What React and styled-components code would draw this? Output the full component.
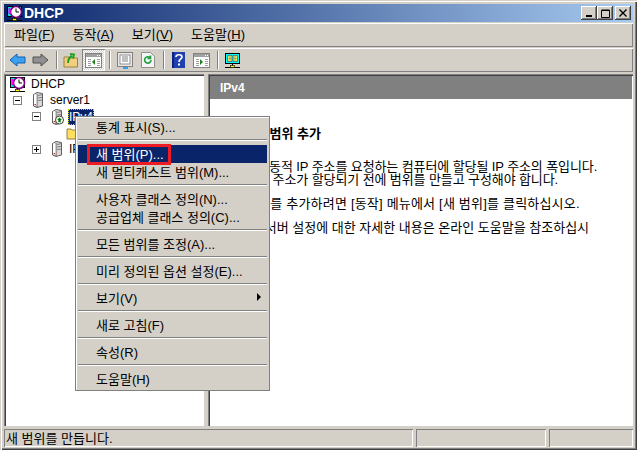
import React from "react";
import styled, { createGlobalStyle } from "styled-components";

const GlobalStyle = createGlobalStyle`
  html, body { margin: 0; padding: 0; background: #d4d0c8; }
  * { box-sizing: border-box; }
`;

const FONT = `"Liberation Sans", "Noto Sans CJK KR", sans-serif`;

const Win = styled.div`
  position: relative;
  width: 637px;
  height: 450px;
  display: flex;
  flex-direction: column;
  padding: 4px 4px 3px 4px;
  background: #d4d0c8;
  font-family: ${FONT};
  font-size: 13px;
  color: #000;
  overflow: hidden;
  box-shadow: inset 1px 1px 0 #d4d0c8, inset 2px 2px 0 #fff, inset -1px -1px 0 #404040, inset -2px -2px 0 #808080;
`;

const TitleBar = styled.div`
  height: 18px;
  flex: none;
  display: flex;
  align-items: center;
  padding: 0 2px 0 2px;
  background: linear-gradient(90deg, #0a246a, #a6caf0);
  color: #fff;
  font-weight: bold;
`;

const TitleText = styled.span`
  margin-left: 1px;
  font-family: "Liberation Sans", sans-serif;
  font-size: 14px;
`;

const CaptionButtons = styled.div`
  margin-left: auto;
  display: flex;
`;

const CapBtn = styled.div`
  width: 16px;
  height: 14px;
  margin-left: ${({ $gap }) => $gap || 0}px;
  background: #d4d0c8;
  box-shadow: inset -1px -1px 0 #404040, inset 1px 1px 0 #fff, inset -2px -2px 0 #808080;
  display: flex;
  align-items: center;
  justify-content: center;
`;

const Bar = styled.div`
  flex: none;
  display: flex;
  align-items: center;
  height: 24px;
  margin-top: 1px;
  background: #d4d0c8;
  box-shadow: inset 1px 1px 0 #fff, inset -1px -1px 0 #808080;
`;

const MenuBar = styled(Bar)`
  padding-left: 10px;
  gap: 18px;
`;

const MenuName = styled.span`
  line-height: 24px;
  white-space: nowrap;
`;

const ToolBar = styled(Bar)`
  padding-left: 2px;
`;

const ToolBtn = styled.div`
  width: ${({ $w }) => $w || 23}px;
  height: 22px;
  flex: none;
  display: flex;
  align-items: center;
  justify-content: center;
  ${({ $pressed }) =>
    $pressed &&
    `background: repeating-conic-gradient(#fff 0 25%, #d4d0c8 0 50%) 0 0 / 2px 2px;
     box-shadow: inset 1px 1px 0 #808080, inset -1px -1px 0 #fff;`}
`;

const ToolSep = styled.div`
  width: 2px;
  height: 18px;
  flex: none;
  margin: 0 2px 0 4px;
  background: #808080;
  border-right: 1px solid #fff;
`;

const Panes = styled.div`
  flex: 1;
  min-height: 0;
  margin-top: 2px;
  display: flex;
  gap: 4px;
`;

const Pane = styled.div`
  background: #fff;
  width: ${({ $w }) => ($w ? `${$w}px` : "auto")};
  flex: ${({ $w }) => ($w ? "none" : "1")};
  display: flex;
  flex-direction: column;
  overflow: hidden;
  padding: 2px 1px 1px 2px;
  box-shadow: inset 1px 1px 0 #808080, inset 2px 2px 0 #404040, inset -1px -1px 0 #fff;
`;

const Row = styled.div`
  height: 16.25px;
  display: flex;
  align-items: center;
  padding-left: ${({ $indent }) => $indent}px;
  white-space: nowrap;
  font-size: 12px;
`;

const Expander = styled.div`
  width: 9px;
  height: 9px;
  flex: none;
  margin-right: 9px;
  border: 1px solid #808080;
  background: #fff;
  position: relative;
  &::before {
    content: "";
    position: absolute;
    left: 1px;
    right: 1px;
    top: 3px;
    height: 1px;
    background: #000;
  }
  ${({ $open }) =>
    !$open &&
    `&::after {
      content: "";
      position: absolute;
      top: 1px;
      bottom: 1px;
      left: 3px;
      width: 1px;
      background: #000;
    }`}
`;

const TreeLabel = styled.span`
  margin-left: 4px;
  padding: 0 1px;
  ${({ $selected }) =>
    $selected &&
    `background: #0a246a; color: #fff; outline: 1px dotted #d4d000; outline-offset: -1px; line-height: 16px;`}
`;

const Header = styled.div`
  height: 23px;
  flex: none;
  background: #808080;
  color: #fff;
  font-weight: bold;
  font-size: 12px;
  display: flex;
  align-items: center;
  padding-left: 10px;
`;

const Body = styled.div`
  padding: 28px 0 0 20px;
  white-space: nowrap;
`;

const Heading = styled.div`
  font-weight: bold;
  line-height: 14px;
  padding-left: 24px;
  margin-bottom: 20px;
`;

const Para = styled.div`
  line-height: 12.5px;
  margin-bottom: 11.5px;
  letter-spacing: ${({ $spacing }) => $spacing || 0}px;
`;

const Small = styled.span`
  font-size: 11px;
`;

const StatusBar = styled.div`
  flex: none;
  height: 18px;
  margin-top: 3px;
  display: flex;
  gap: 3px;
`;

const StatusCell = styled.div`
  width: ${({ $w }) => ($w ? `${$w}px` : "auto")};
  flex: ${({ $w }) => ($w ? "none" : "1")};
  display: flex;
  align-items: center;
  padding: 0 0 2px 2px;
  white-space: nowrap;
  box-shadow: inset 1px 1px 0 #808080, inset -1px -1px 0 #fff;
`;

const ContextMenu = styled.div`
  position: absolute;
  left: 75px;
  top: 116px;
  width: 195px;
  padding: 2px 3px 3px 3px;
  background: #d4d0c8;
  box-shadow: inset 1px 1px 0 #808080, inset -1px -1px 0 #808080, inset 2px 2px 0 #fff;
`;

const Item = styled.div`
  position: relative;
  height: 18px;
  display: flex;
  align-items: center;
  padding: 0 6px 2px 18px;
  white-space: nowrap;
  ${({ $active }) => $active && `background: #0a246a; color: #fff;`}
`;

const Sep = styled.div`
  height: 2px;
  margin: 3px 0 4px 0;
  background: #808080;
  border-bottom: 1px solid #fff;
`;

const SubArrow = styled.span`
  margin-left: auto;
  width: 0;
  height: 0;
  border-left: 4px solid #000;
  border-top: 4px solid transparent;
  border-bottom: 4px solid transparent;
`;

const RedBox = styled.div`
  position: absolute;
  left: 9px;
  top: -1px;
  width: 84px;
  height: 21px;
  border: 3px solid #ed1c24;
`;

const MonitorIcon = ({ book }) => (
  <svg width="17" height="17" viewBox="0 0 17 17">
    <rect x="1.5" y="1.5" width="14" height="10" fill={book ? "#00ffff" : "#00e0e0"} stroke="#000" />
    {book ? (
      <>
        <path d="M3.5 3.5h4.5v6h-4.5zM9 3.5h4.5v6H9z" fill="#ffff66" stroke="#555" strokeWidth="0.7" />
        <path d="M4.5 5h3M4.5 6.5h3M4.5 8h3M9.5 5h3M9.5 6.5h3M9.5 8h3" stroke="#555" strokeWidth="0.6" />
      </>
    ) : (
      <>
        <circle cx="10" cy="7" r="5.5" fill="#fff" stroke="#800080" strokeWidth="1.6" />
        <path d="M10 3.5V7H13" fill="none" stroke="#000" />
        <rect x="2.5" y="3" width="2" height="6" fill="#ff00ff" />
      </>
    )}
    <path d="M8.5 12v2" stroke="#000" />
    <path d="M1 15.5h15" stroke="#000" />
    <rect x="6.5" y="13.5" width="4" height="2" fill="#ffff00" stroke="#000" strokeWidth="0.6" />
  </svg>
);

const ArrowIcon = ({ fill, stroke, flip }) => (
  <svg width="17" height="14" viewBox="0 0 17 14" style={flip ? { transform: "scaleX(-1)" } : undefined}>
    <path d="M1 7 L8 1 V4 H16 V10 H8 V13 Z" fill={fill} stroke={stroke} />
  </svg>
);

const FolderUpIcon = () => (
  <svg width="16" height="16" viewBox="0 0 16 16">
    <path d="M1 5h5l1 1h7.5v9H1z" fill="#f0d080" stroke="#a08040" />
    <path d="M5 11c0-4 2-6 4-7M7 2l4 .5-1 4" fill="none" stroke="#20a020" strokeWidth="2" />
  </svg>
);

const PaneIcon = ({ arrow, back }) => (
  <svg width="17" height="15" viewBox="0 0 17 15">
    <rect x="0.5" y="0.5" width="16" height="14" fill="#fff" stroke="#808080" />
    <rect x="1" y="1" width="15" height="3" fill="#a0a0a0" />
    <path d="M12 2.5h1M14 2.5h1" stroke="#fff" />
    <path d="M3 6.5h3M3 8.5h3M3 10.5h3M3 12.5h3M12 6.5h3M12 8.5h3M12 10.5h3M12 12.5h3" stroke="#a0a0a0" />
    <path d={back ? "M10 6v6l-3-3z" : "M7 6v6l3-3z"} fill={arrow} />
  </svg>
);

const ExportIcon = () => (
  <svg width="16" height="17" viewBox="0 0 16 17">
    <rect x="0.5" y="0.5" width="15" height="14" fill="#e8e8e8" stroke="#808080" />
    <rect x="3" y="3" width="10" height="9" fill="#fff" stroke="#909090" />
    <path d="M5 5h6M5 7h6M5 9h6" stroke="#808080" />
    <rect x="6" y="15" width="5" height="2" fill="#30a0f0" />
  </svg>
);

const RefreshIcon = () => (
  <svg width="14" height="16" viewBox="0 0 14 16">
    <path d="M0.5 0.5h9l4 4v11h-13z" fill="#f4f4f4" stroke="#909090" />
    <path d="M10 8a3.2 3.2 0 1 1-1-2.4M9.5 3.5v3h-3" fill="none" stroke="#20a040" strokeWidth="1.6" />
  </svg>
);

const HelpIcon = () => (
  <svg width="13" height="16" viewBox="0 0 13 16">
    <rect width="13" height="16" fill="#2040b0" />
    <rect x="0" y="0" width="2" height="16" fill="#102080" />
    <path d="M4 5c0-3 6-3 6 0 0 2-3 2-3 5" fill="none" stroke="#fff" strokeWidth="1.7" />
    <rect x="6" y="11.5" width="2" height="2" fill="#fff" />
  </svg>
);

const ServerIcon = ({ badge }) => (
  <svg width="14" height="16" viewBox="0 0 14 16">
    <path d="M2.5 2.5 L6 .5 L11.5 1.5 V14 L6 15.5 L2.5 14z" fill="#d8d8d8" stroke="#606060" />
    <path d="M6 2v13" stroke="#606060" />
    <path d="M7 3.5l4-.8M7 6l4-.6M7 8.5l4-.4" stroke="#808080" />
    <rect x="3" y="2.5" width="2.5" height="11" fill="#fff" />
    <rect x="3.6" y="12" width="1.2" height="1.2" fill="#d00000" />
    {badge && (
      <>
        <circle cx="9.5" cy="11" r="4" fill="#fff" stroke="#404040" />
        <path d="M9.5 8.5l2.5 2.5h-1.3v2.2h-2.4V11H7z" fill="#008000" />
      </>
    )}
  </svg>
);

const FolderIcon = () => (
  <svg width="14" height="14" viewBox="0 0 14 14">
    <path d="M1 3h4l1 1h7v9H1z" fill="#ffe060" stroke="#908040" />
  </svg>
);

const App = () => {
  return (
    <Win>
      <GlobalStyle />
      <TitleBar>
        <MonitorIcon />
        <TitleText>DHCP</TitleText>
        <CaptionButtons>
          <CapBtn>
            <svg width="8" height="8" viewBox="0 0 8 8"><rect x="1" y="6" width="6" height="2" /></svg>
          </CapBtn>
          <CapBtn>
            <svg width="9" height="9" viewBox="0 0 9 9"><path d="M.5 1.5h8v7h-8zM.5 1h8" fill="none" stroke="#000" /></svg>
          </CapBtn>
          <CapBtn $gap={2}>
            <svg width="8" height="8" viewBox="0 0 8 8"><path d="M.5.5l7 7M7.5.5l-7 7" stroke="#000" strokeWidth="1.4" /></svg>
          </CapBtn>
        </CaptionButtons>
      </TitleBar>

      <MenuBar>
        <MenuName>파일(<u>F</u>)</MenuName>
        <MenuName>동작(<u>A</u>)</MenuName>
        <MenuName>보기(<u>V</u>)</MenuName>
        <MenuName>도움말(<u>H</u>)</MenuName>
      </MenuBar>

      <ToolBar>
        <ToolBtn><ArrowIcon fill="#3aa0f0" stroke="#1060b0" /></ToolBtn>
        <ToolBtn><ArrowIcon fill="#909090" stroke="#505050" flip /></ToolBtn>
        <ToolSep />
        <ToolBtn $w={22}><FolderUpIcon /></ToolBtn>
        <ToolBtn $pressed><PaneIcon arrow="#208020" back /></ToolBtn>
        <ToolSep />
        <ToolBtn><ExportIcon /></ToolBtn>
        <ToolBtn><RefreshIcon /></ToolBtn>
        <ToolSep />
        <ToolBtn><HelpIcon /></ToolBtn>
        <ToolBtn><PaneIcon arrow="#208020" /></ToolBtn>
        <ToolSep />
        <ToolBtn><MonitorIcon book /></ToolBtn>
      </ToolBar>

      <Panes>
        <Pane $w={200}>
          <Row $indent={3}><MonitorIcon /><TreeLabel>DHCP</TreeLabel></Row>
          <Row $indent={7}><Expander $open /><ServerIcon /><TreeLabel>server1</TreeLabel></Row>
          <Row $indent={26}><Expander $open /><ServerIcon badge /><TreeLabel $selected>IPv4</TreeLabel></Row>
          <Row $indent={60}><FolderIcon /></Row>
          <Row $indent={26}><Expander /><ServerIcon /><TreeLabel>IPv6</TreeLabel></Row>
        </Pane>
        <Pane>
          <Header>IPv4</Header>
          <Body>
            <Heading>새 범위 추가</Heading>
            <Para $spacing={-0.1}>
              범위는 동적 IP 주소를 요청하는 컴퓨터에 할당될 IP 주소의 폭입니다.
              <br />
              먼저 IP 주소가 할당되기 전에 범위를 만들고 구성해야 합니다.
            </Para>
            <Para $spacing={0.2}>새 범위를 추가하려면 [동작] 메뉴에서 [새 범위]를 클릭하십시오.</Para>
            <Para><Small>DHCP</Small> 서버 설정에 대한 자세한 내용은 온라인 도움말을 참조하십시</Para>
          </Body>
        </Pane>
      </Panes>

      <StatusBar>
        <StatusCell $w={409}>새 범위를 만듭니다.</StatusCell>
        <StatusCell $w={130} />
        <StatusCell />
      </StatusBar>

      <ContextMenu>
        <Item>통계 표시(S)...</Item>
        <Sep />
        <Item $active>
          새 범위(P)...
          <RedBox />
        </Item>
        <Item>새 멀티캐스트 범위(M)...</Item>
        <Sep />
        <Item>사용자 클래스 정의(N)...</Item>
        <Item>공급업체 클래스 정의(C)...</Item>
        <Sep />
        <Item>모든 범위를 조정(A)...</Item>
        <Sep />
        <Item>미리 정의된 옵션 설정(E)...</Item>
        <Sep />
        <Item>보기(V)<SubArrow /></Item>
        <Sep />
        <Item>새로 고침(F)</Item>
        <Sep />
        <Item>속성(R)</Item>
        <Sep />
        <Item>도움말(H)</Item>
      </ContextMenu>
    </Win>
  );
};

export default App;
